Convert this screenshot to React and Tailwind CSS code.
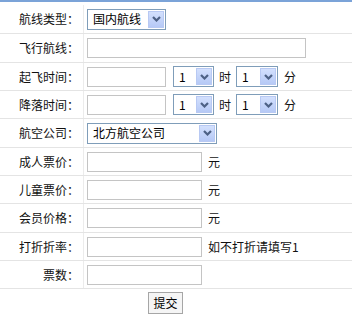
import React from 'react'

const font = { fontFamily: '"Noto Sans CJK SC", "Noto Sans", sans-serif' }

const Chevron = () => (
  <svg width="9" height="6" viewBox="0 0 9 6" className="block">
    <path d="M1 1 L4.5 4.5 L8 1" fill="none" stroke="#4d6185" strokeWidth="2.2" />
  </svg>
)

const Select = ({ value, width }) => (
  <div
    className="flex h-[21px] items-stretch border border-[#7f9db9] bg-white"
    style={{ width }}
  >
    <div className="flex flex-1 items-center pl-[5px] text-[12px] leading-none text-black">
      {value}
    </div>
    <div className="m-px flex w-[16px] items-center justify-center border border-[#b8c9f3] bg-gradient-to-b from-[#d3e0fd] to-[#b6c9f6]">
      <Chevron />
    </div>
  </div>
)

const Input = ({ width }) => (
  <div className="h-[20px] border border-[#c4c4c4] bg-white" style={{ width }} />
)

const Row = ({ label, h, children }) => (
  <div className={`flex border-b border-[#e4e4e4] ${h}`}>
    <div className="flex w-[84px] items-center justify-end border-r border-[#ececec] pr-[4px] text-[12px] text-[#111]">
      {label}
    </div>
    <div className="flex flex-1 items-center pl-[3px] text-[12px] text-[#111]">
      {children}
    </div>
  </div>
)

const TimePick = () => (
  <>
    <Input width={79} />
    <div className="ml-[7px]">
      <Select value="1" width={41} />
    </div>
    <span className="ml-[5px]">时</span>
    <div className="ml-[5px]">
      <Select value="1" width={42} />
    </div>
    <span className="ml-[6px]">分</span>
  </>
)

export default function App() {
  return (
    <div className="h-[317px] w-[352px] overflow-hidden bg-white" style={font}>
      <div className="h-[2px] bg-[#7ba3d8]" />
      <Row label="航线类型：" h="h-[32px] pt-[3px]">
        <Select value="国内航线" width={79} />
      </Row>
      <Row label="飞行航线：" h="h-[29px]">
        <Input width={219} />
      </Row>
      <Row label="起飞时间：" h="h-[28px]">
        <TimePick />
      </Row>
      <Row label="降落时间：" h="h-[28px]">
        <TimePick />
      </Row>
      <Row label="航空公司：" h="h-[29px]">
        <Select value="北方航空公司" width={130} />
      </Row>
      <Row label="成人票价：" h="h-[28px]">
        <Input width={115} />
        <span className="ml-[6px]">元</span>
      </Row>
      <Row label="儿童票价：" h="h-[28px]">
        <Input width={115} />
        <span className="ml-[6px]">元</span>
      </Row>
      <Row label="会员价格：" h="h-[29px]">
        <Input width={115} />
        <span className="ml-[6px]">元</span>
      </Row>
      <Row label="打折折率：" h="h-[28px]">
        <Input width={115} />
        <span className="ml-[6px]">如不打折请填写1</span>
      </Row>
      <Row label="票数：" h="h-[28px]">
        <Input width={115} />
      </Row>
      <div className="flex h-[29px] items-center border-b border-[#e4e4e4] pl-[148px]">
        <button className="h-[22px] w-[35px] border border-[#a6a6a6] bg-[#f5f5f5] text-[12px] leading-none text-black">
          提交
        </button>
      </div>
    </div>
  )
}
